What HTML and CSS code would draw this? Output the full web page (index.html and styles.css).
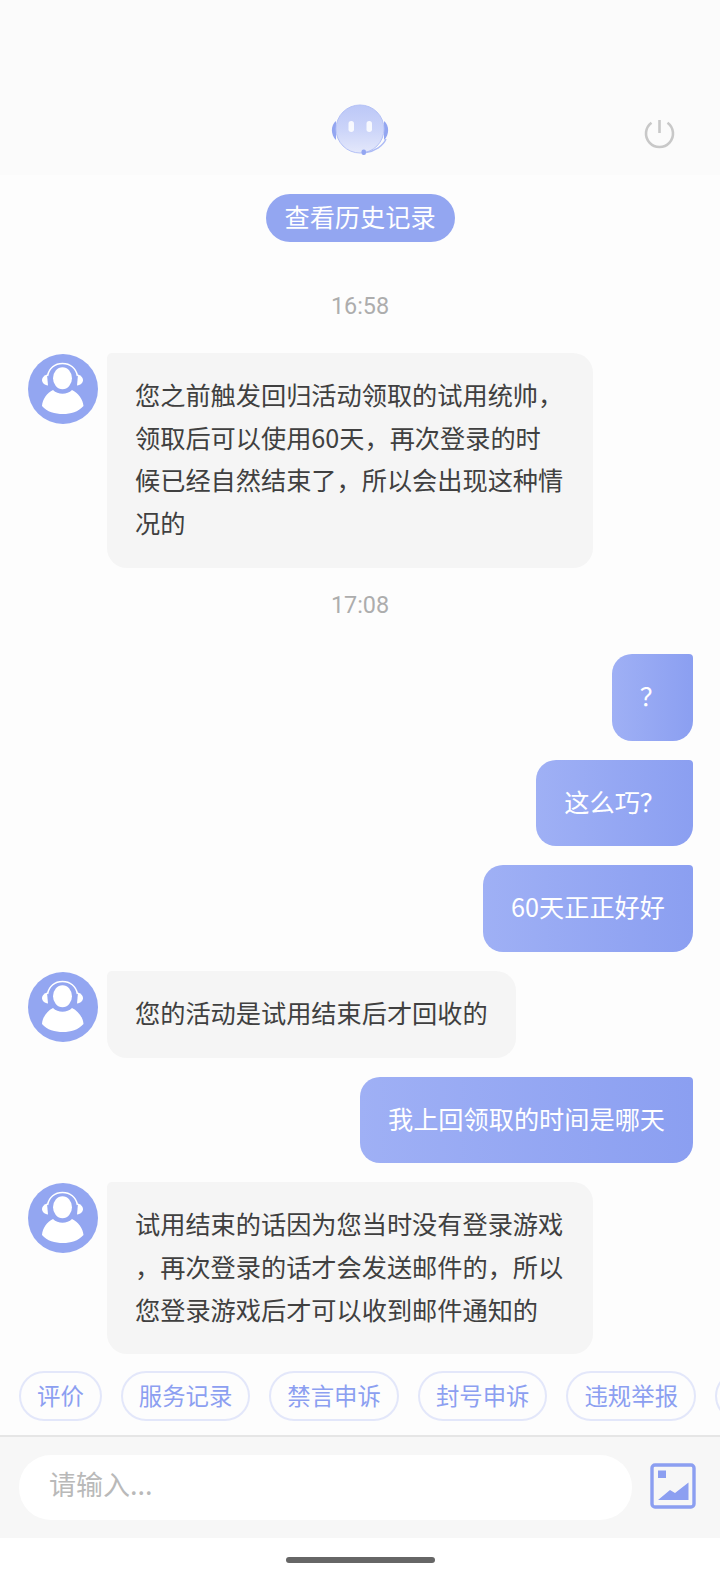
FILE: index.html
```html
<!DOCTYPE html>
<html lang="zh-CN">
<head>
  <meta charset="UTF-8">
  <meta name="viewport" content="width=device-width, initial-scale=1.0">
  <title>客服</title>
  <link rel="stylesheet" href="styles.css">
</head>
<body>
<svg class="icon-defs" width="0" height="0">
  <symbol id="agent" viewBox="0 0 70 70">
    <circle cx="35" cy="35" r="35" fill="#93a6f1"/>
    <path d="M19.5 22 C21 14 27 9.5 34.5 9.5 C42 9.5 48 14 49.5 22" fill="none" stroke="#fff" stroke-width="1.6"/>
    <path d="M19 20.5 C15.5 21.5 14 24 14 26 C14 28.5 16 31 20 31.5 Z" fill="#fff"/>
    <path d="M50 20.5 C53.5 21.5 55 24 55 26 C55 28.5 53 31 49 31.5 Z" fill="#fff"/>
    <ellipse cx="34.5" cy="24.3" rx="9.5" ry="11" fill="#fff"/>
    <path d="M25 36 C30 41 39 41 44 36 C50 39 55 45 55.5 52 C50 58 43 60 35 60 C27 60 19 58 14 52 C14.5 45 19 39 25 36 Z" fill="#fff"/>
  </symbol>
</svg>

<div class="app">
  <header class="top-bar">
    <div class="bot-logo">
      <svg width="60" height="52" viewBox="0 0 60 52">
        <defs>
          <linearGradient id="botFace" x1="0" y1="0" x2="0" y2="1">
            <stop offset="0" stop-color="#bcc8f7"/>
            <stop offset="0.5" stop-color="#cbd4f9"/>
            <stop offset="1" stop-color="#e4e8fb"/>
          </linearGradient>
        </defs>
        <path d="M6 17 C0.500 21 0.500 31 6 36 Z" fill="#93a6f1"/>
        <path d="M54 17 C59.500 21 59.500 31 54 36 Z" fill="#93a6f1"/>
        <circle cx="30" cy="25" r="24" fill="url(#botFace)" stroke="#b4c1f6" stroke-width="1"/>
        <rect x="18.5" y="17" width="5.5" height="11" rx="2.7" fill="#fff" opacity="0.85"/>
        <rect x="36.5" y="17" width="5.5" height="11" rx="2.7" fill="#fff" opacity="0.85"/>
        <path d="M56 35 C53 42 45 47 36 48.500" fill="none" stroke="#aebcf5" stroke-width="1.5"/>
        <rect x="31.5" y="45.5" width="4.5" height="5.5" rx="2" fill="#93a6f1"/>
      </svg>
    </div>
    <button class="power-btn">
      <svg width="32" height="32" viewBox="0 0 32 32" fill="none" stroke="#c8c8c8" stroke-width="2.6">
        <path d="M7.5 4.7 A13.5 13.5 0 1 0 23.5 4.7"/>
        <path d="M15.5 2 V15"/>
      </svg>
    </button>
  </header>

  <main class="chat">
    <button class="history-btn">查看历史记录</button>
    <div class="time first">16:58</div>

    <div class="msg">
      <svg class="avatar"><use href="#agent"/></svg>
      <div class="bubble">您之前触发回归活动领取的试用统帅，领取后可以使用60天，再次登录的时候已经自然结束了，所以会出现这种情况的</div>
    </div>

    <div class="time">17:08</div>

    <div class="msg mine"><div class="bubble">？</div></div>
    <div class="msg mine"><div class="bubble">这么巧？</div></div>
    <div class="msg mine"><div class="bubble">60天正正好好</div></div>

    <div class="msg">
      <svg class="avatar"><use href="#agent"/></svg>
      <div class="bubble">您的活动是试用结束后才回收的</div>
    </div>

    <div class="msg mine"><div class="bubble">我上回领取的时间是哪天</div></div>

    <div class="msg">
      <svg class="avatar"><use href="#agent"/></svg>
      <div class="bubble">试用结束的话因为您当时没有登录游戏，再次登录的话才会发送邮件的，所以您登录游戏后才可以收到邮件通知的</div>
    </div>
  </main>

  <div class="chips">
    <span class="chip">评价</span>
    <span class="chip">服务记录</span>
    <span class="chip">禁言申诉</span>
    <span class="chip">封号申诉</span>
    <span class="chip">违规举报</span>
    <span class="chip chip-clipped"></span>
  </div>

  <div class="input-bar">
    <div class="input-box">请输入...</div>
    <svg class="pic-btn" width="46" height="46" viewBox="0 0 46 46">
      <rect x="2" y="2" width="42" height="42" rx="3" fill="none" stroke="#8c9ff1" stroke-width="3.4"/>
      <rect x="8" y="7.5" width="8" height="7.5" fill="#8c9ff1"/>
      <path d="M8 37 L20 27 L25 30 L38.500 19.500 V37 Z" fill="#8c9ff1"/>
    </svg>
  </div>

  <div class="home-area"><div class="home-bar"></div></div>
</div>
</body>
</html>
```

FILE: styles.css
```css
:root {
  --accent: #93a6f1;
  --text-color: #404040;
  --chip-border: #e3e7fa;
}

html, body {
  margin: 0;
  padding: 0;
}

body {
  background-color: #fdfdfd;
  font-family: "Noto Sans CJK SC", "Noto Sans", sans-serif;
  color: var(--text-color);
}

.icon-defs {
  position: absolute;
}

.app {
  width: 720px;
  height: 1584px;
  display: flex;
  flex-direction: column;
  overflow: hidden;
}

.top-bar {
  height: 175px;
  flex: none;
  background-color: #fbfbfb;
  display: flex;
  justify-content: center;
  align-items: flex-start;
  position: relative;
  padding-top: 104px;
  box-sizing: border-box;
}

.power-btn {
  position: absolute;
  top: 118px;
  right: 44px;
  padding: 0;
  border: none;
  background: none;
}

.power-btn svg,
.bot-logo svg {
  display: block;
}

.chat {
  flex: 1;
  min-height: 0;
  display: flex;
  flex-direction: column;
}

.history-btn {
  align-self: center;
  margin-top: 19px;
  height: 48px;
  width: 189px;
  padding: 0 0 4px;
  border: none;
  border-radius: 24px;
  background-color: var(--accent);
  color: #fff;
  font-family: inherit;
  font-size: 25.2px;
  line-height: 44px;
}

.time {
  margin: 3px 0 34px;
  height: 30px;
  line-height: 30px;
  text-align: center;
  font-size: 23.4px;
  font-family: "Roboto", sans-serif;
  color: #adadad;
}

.time.first {
  margin: 49px 0 32px;
}

.msg {
  display: flex;
  align-items: flex-start;
  padding: 0 28px;
  margin-bottom: 19px;
}

.msg.mine {
  justify-content: flex-end;
  padding-right: 27px;
}

.avatar {
  flex: none;
  width: 70px;
  height: 70px;
  margin: 1px 9px 0 0;
}

.bubble {
  max-width: 430px;
  padding: 20px 28px 24px;
  background-color: #f5f5f5;
  border-radius: 5px 20px 20px 20px;
  font-size: 25.2px;
  line-height: 42.7px;
  word-break: break-all;
  line-break: anywhere;
}

.mine .bubble {
  background: linear-gradient(90deg, #9fb0f5, #8b9ff1);
  color: #fff;
  border-radius: 20px 4px 20px 20px;
}

.chips {
  flex: none;
  height: 85px;
  box-sizing: border-box;
  display: flex;
  gap: 19px;
  padding: 19px 19px 0;
  overflow: hidden;
  border-bottom: 2px solid #e6e6e6;
}

.chip {
  flex: none;
  height: 50px;
  line-height: 44px;
  box-sizing: border-box;
  padding: 0 16px;
  border: 2px solid var(--chip-border);
  border-radius: 25px;
  color: #8c9ff1;
  font-size: 23.4px;
}

.chip-clipped {
  width: 83px;
}

.input-bar {
  flex: none;
  height: 101px;
  box-sizing: border-box;
  background-color: #f7f7f7;
  display: flex;
  align-items: flex-start;
  padding: 18px 24px 0 19px;
}

.input-box {
  width: 613px;
  height: 65px;
  line-height: 58px;
  box-sizing: border-box;
  padding-left: 30px;
  background-color: #fff;
  border-radius: 32px;
  color: #b9b9b9;
  font-size: 27px;
}

.pic-btn {
  margin: 8px 0 0 18px;
  flex: none;
}

.home-area {
  flex: none;
  height: 46px;
  background-color: #fff;
  padding-top: 19px;
  box-sizing: border-box;
}

.home-bar {
  width: 149px;
  height: 6px;
  margin: 0 auto;
  border-radius: 3px;
  background-color: #666;
}
```
